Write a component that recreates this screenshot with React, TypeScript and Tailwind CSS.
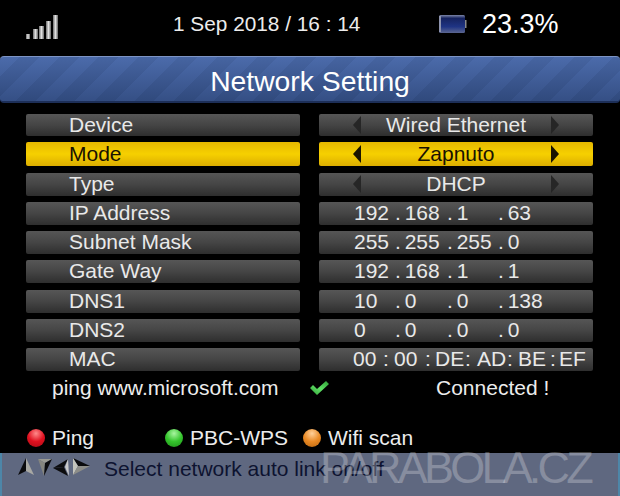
const font = "font-['Liberation_Sans',Arial,sans-serif]";

const greyBar =
  "rounded-[2px] bg-gradient-to-b from-[#565656] via-[#454545] to-[#2e2e2e] text-[#e9e9e9] pb-[2px]";
const yellowBar =
  "rounded-[2px] bg-gradient-to-b from-[#e6b800] via-[#f6d000] to-[#dcae00] text-[#1a1200] pb-[2px]";

function Arrow({ dir, active }: { dir: "left" | "right"; active: boolean }) {
  return (
    <svg width="8" height="18" viewBox="0 0 8 18" className="mt-[2px] shrink-0">
      <polygon
        points={dir === "left" ? "8,0 0,9 8,18" : "0,0 8,9 0,18"}
        fill={active ? "#1a1400" : "#262626"}
      />
    </svg>
  );
}

function Label({ text, active = false, h = "h-[23px]" }: { text: string; active?: boolean; h?: string }) {
  return (
    <div className={`flex w-[274px] items-center pl-[43px] ${h} ${active ? yellowBar : greyBar}`}>
      {text}
    </div>
  );
}

function Choice({ text, active = false, h = "h-[23px]" }: { text: string; active?: boolean; h?: string }) {
  return (
    <div className={`flex w-[274px] items-center justify-between px-[34px] ${h} ${active ? yellowBar : greyBar}`}>
      <Arrow dir="left" active={active} />
      <span>{text}</span>
      <Arrow dir="right" active={active} />
    </div>
  );
}

function Address({ parts }: { parts: string[] }) {
  return (
    <div className={`grid h-[23px] w-[274px] grid-cols-[41px_52px_51px_1fr] items-center pl-[35px] [word-spacing:-2px] ${greyBar}`}>
      {parts.map((part, i) => (
        <span key={i} className="whitespace-pre">
          {i > 0 ? `. ${part}` : part}
        </span>
      ))}
    </div>
  );
}

function Mac() {
  const cols = ["00", ":", "00", ":", "DE", ":", "AD", ":", "BE", ":", "EF"];
  return (
    <div className={`grid h-[23px] w-[274px] grid-cols-[30px_11px_31px_10px_30px_12px_30px_11px_32px_9px_1fr] items-center pl-[34px] ${greyBar}`}>
      {cols.map((c, i) => (
        <span key={i}>{c}</span>
      ))}
    </div>
  );
}

function Row({ left, right }: { left: React.ReactNode; right: React.ReactNode }) {
  return (
    <div className="flex gap-[19px]">
      {left}
      {right}
    </div>
  );
}

function Dot({ color }: { color: string }) {
  return <span className={`size-[18px] rounded-full ${color}`} />;
}

function Signal() {
  return (
    <svg width="34" height="26" viewBox="0 0 34 26" className="mt-[14px]">
      <defs>
        <linearGradient id="bar" x1="0" y1="0" x2="1" y2="0">
          <stop offset="0" stopColor="#6e6e6e" />
          <stop offset="0.5" stopColor="#e0e0e0" />
          <stop offset="1" stopColor="#666" />
        </linearGradient>
      </defs>
      <rect x="0" y="20" width="4" height="5" fill="url(#bar)" />
      <rect x="7" y="15" width="5" height="10" fill="url(#bar)" />
      <rect x="13" y="12" width="5" height="13" fill="url(#bar)" />
      <rect x="20" y="7" width="5" height="18" fill="url(#bar)" />
      <rect x="27" y="1" width="5" height="24" fill="url(#bar)" />
    </svg>
  );
}

function Battery() {
  return (
    <svg width="28" height="18" viewBox="0 0 28 18" className="mt-[15px]">
      <defs>
        <linearGradient id="cell" x1="0" y1="0" x2="0" y2="1">
          <stop offset="0" stopColor="#7e87a8" />
          <stop offset="0.18" stopColor="#16235f" />
          <stop offset="0.65" stopColor="#1f3484" />
          <stop offset="1" stopColor="#5c6690" />
        </linearGradient>
      </defs>
      <rect x="0" y="0" width="26" height="18" rx="1.5" fill="url(#cell)" />
      <rect x="0" y="1" width="2" height="16" fill="#8d93ad" />
      <rect x="26" y="5" width="1.5" height="8" fill="#8a8a8a" />
    </svg>
  );
}

function Check() {
  return (
    <svg width="20" height="16" viewBox="0 0 20 16">
      <defs>
        <linearGradient id="tick" x1="0" y1="1" x2="1" y2="0">
          <stop offset="0" stopColor="#2f9e36" />
          <stop offset="0.5" stopColor="#5fe065" />
          <stop offset="1" stopColor="#2f9e36" />
        </linearGradient>
      </defs>
      <polygon points="0,8 3,5 7,9 16,1 19,4 7,15" fill="url(#tick)" />
    </svg>
  );
}

function NavArrows() {
  return (
    <svg width="74" height="20" viewBox="0 0 74 20" className="shrink-0">
      <polygon points="8,0 0,17 8,13" fill="#0b0b0d" />
      <polygon points="8,0 16,17 8,13" fill="#a9a9a4" />
      <polygon points="20,1 34,1 27,5" fill="#9a9a92" />
      <polygon points="20,1 26,18 27,5" fill="#85857e" />
      <polygon points="34,1 26,18 27,5" fill="#0b0b0d" />
      <polygon points="35,10 50,1 46,9" fill="#0b0b0d" />
      <polygon points="35,10 50,18 46,9" fill="#0b0b0d" />
      <polygon points="50,1 51,18 47,9" fill="#c9c9c9" />
      <polygon points="55,0 72,8 60,8" fill="#0b0b0d" />
      <polygon points="55,0 55,17 60,8" fill="#c4c4bc" />
      <polygon points="55,17 72,8 60,8" fill="#8d8d88" />
    </svg>
  );
}

export default function App() {
  return (
    <div className={`${font} relative flex h-[496px] w-[620px] flex-col overflow-hidden bg-black text-[21px] leading-none text-[#ececec]`}>
      <header className="flex h-[56px] shrink-0 items-start pl-[26px]">
        <Signal />
        <span className="ml-[113px] mt-[14px] w-[266px] text-[20.8px]">1 Sep 2018 / 16 : 14</span>
        <Battery />
        <span className="ml-[15px] mt-[11px] text-[27px] text-white">23.3%</span>
      </header>

      <div className="flex h-[47px] shrink-0 items-center justify-center rounded-[4px] border-t border-[#7d94c4] border-b-2 border-b-[#1d2f58] bg-[linear-gradient(to_bottom,rgba(255,255,255,0.05),rgba(0,0,0,0.2)),repeating-linear-gradient(135deg,#4263a6_0px,#4263a6_14px,#3c5c9c_14px,#3c5c9c_28px)] pt-[5px] text-[28.3px] text-white">
        Network Setting
      </div>

      <div className="mt-[11px] flex flex-col gap-[6.3px] pl-[26px]">
        <Row left={<Label text="Device" h="h-[22px]" />} right={<Choice text="Wired Ethernet" h="h-[22px]" />} />
        <Row left={<Label text="Mode" active h="h-[24px]" />} right={<Choice text="Zapnuto" active h="h-[24px]" />} />
        <Row left={<Label text="Type" />} right={<Choice text="DHCP" />} />
        <Row left={<Label text="IP Address" />} right={<Address parts={["192", "168", "1", "63"]} />} />
        <Row left={<Label text="Subnet Mask" />} right={<Address parts={["255", "255", "255", "0"]} />} />
        <Row left={<Label text="Gate Way" />} right={<Address parts={["192", "168", "1", "1"]} />} />
        <Row left={<Label text="DNS1" />} right={<Address parts={["10", "0", "0", "138"]} />} />
        <Row left={<Label text="DNS2" />} right={<Address parts={["0", "0", "0", "0"]} />} />
        <Row left={<Label text="MAC" />} right={<Mac />} />
      </div>

      <div className="mt-[6px] flex items-center pl-[52px]">
        <span className="w-[258px]">ping www.microsoft.com</span>
        <Check />
        <span className="ml-[106px]">Connected !</span>
      </div>

      <div className="mt-[29px] flex items-center pl-[27px]">
        <Dot color="bg-[radial-gradient(circle_at_50%_25%,#ff8a8a,#e0101f_50%,#a80c16)]" />
        <span className="ml-[7px] w-[113px]">Ping</span>
        <Dot color="bg-[radial-gradient(circle_at_50%_25%,#a8f5a0,#35c52d_50%,#1d8f18)]" />
        <span className="ml-[7px] w-[113px]">PBC-WPS</span>
        <Dot color="bg-[radial-gradient(circle_at_50%_25%,#ffd09a,#ea8a25_50%,#b8650f)]" />
        <span className="ml-[7px]">Wifi scan</span>
      </div>

      <footer className="absolute inset-x-0 bottom-0 flex h-[43px] items-start gap-[12px] border-x-2 border-x-[#4d86a8] bg-[#5f6880] pl-[16px] pt-[5px] text-[21px] text-[#0d1330]">
        <NavArrows />
        <span>Select network auto link on/off</span>
      </footer>

      <span className="absolute left-[320px] top-[445px] text-[45px] tracking-[-3.8px] text-white/25">
        PARABOLA.CZ
      </span>
    </div>
  );
}
